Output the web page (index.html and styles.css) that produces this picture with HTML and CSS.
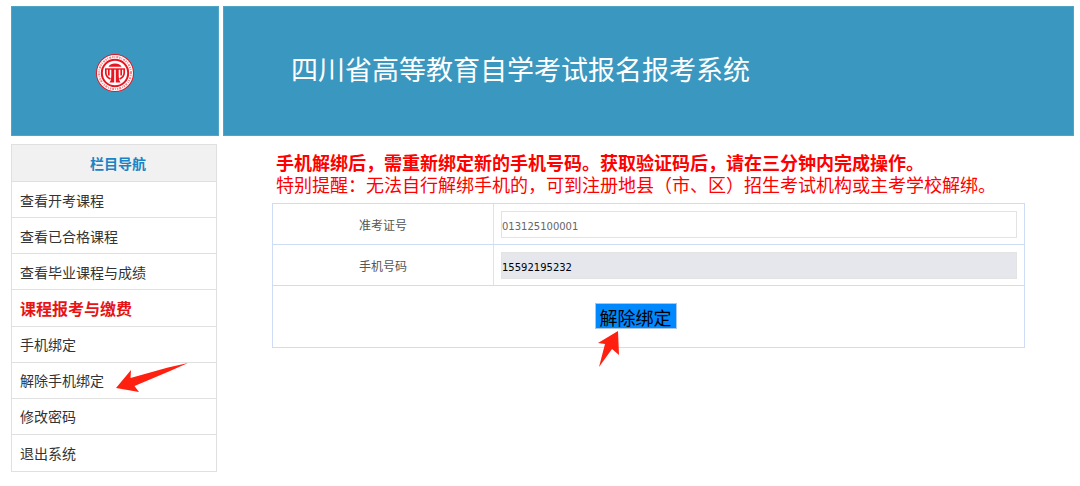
FILE: index.html
```html
<!DOCTYPE html>
<html lang="zh-CN">
<head>
<meta charset="utf-8">
<meta name="viewport" content="width=device-width, initial-scale=1">
<title>四川省高等教育自学考试报名报考系统</title>
<link rel="stylesheet" href="styles.css">
</head>
<body>
<div class="page">
  <header class="header">
    <div class="header__logo">
      <svg class="seal" viewBox="0 0 38 38" aria-hidden="true">
        <circle cx="19" cy="19" r="19" fill="#e8141f"/>
        <circle cx="19" cy="19" r="18" fill="#fff"/>
        <circle cx="19" cy="19" r="16" fill="none" stroke="#f0868c" stroke-width="2" stroke-dasharray="1.3 1 0.8 1.2 2 0.9"/>
        <circle cx="19" cy="19" r="13.2" fill="none" stroke="#e8141f" stroke-width="2"/>
        <path d="M12.500 12.800Q13.500 9.600 19 9.400Q24.500 9.600 25.500 12.800Z" fill="#e8141f"/>
        <path d="M9 15H29" stroke="#e8141f" stroke-width="1.400"/>
        <path d="M9.800 15V19Q10 23 14.500 25M12.800 15V21.500M28.200 15V19Q28 23 23.500 25M25.200 15V21.500" fill="none" stroke="#e8141f" stroke-width="1.700"/>
        <path d="M15.300 15H18.200V28.500H13.500Q15.500 26 15.300 22ZM19.800 15H22.700V22Q22.500 26 24.500 28.500H19.800Z" fill="#e8141f"/>
      </svg>
    </div>
    <div class="header__banner"><h1 class="header__title">四川省高等教育自学考试报名报考系统</h1></div>
  </header>
  <div class="body">
    <nav class="nav" aria-labelledby="nav-title">
      <h2 class="nav__title" id="nav-title">栏目导航</h2>
      <ul class="nav__list">
        <li class="nav__item"><a class="nav__link" href="#">查看开考课程</a></li>
        <li class="nav__item"><a class="nav__link" href="#">查看已合格课程</a></li>
        <li class="nav__item"><a class="nav__link" href="#">查看毕业课程与成绩</a></li>
        <li class="nav__item"><a class="nav__link nav__link--hot" href="#">课程报考与缴费</a></li>
        <li class="nav__item"><a class="nav__link" href="#">手机绑定</a></li>
        <li class="nav__item"><a class="nav__link" href="#">解除手机绑定</a>
          <svg class="arrow arrow--nav" viewBox="0 0 72 30" aria-hidden="true"><path d="M0 25L15 7L14.500 15L52 4.500L72 0L54 8L18.500 23L23 29Z" fill="#ff2010"/></svg>
        </li>
        <li class="nav__item"><a class="nav__link" href="#">修改密码</a></li>
        <li class="nav__item"><a class="nav__link" href="#">退出系统</a></li>
      </ul>
    </nav>
    <main class="main">
      <div class="notice">
        <p class="notice__line notice__line--strong">手机解绑后，需重新绑定新的手机号码。获取验证码后，请在三分钟内完成操作。</p>
        <p class="notice__line">特别提醒：无法自行解绑手机的，可到注册地县（市、区）招生考试机构或主考学校解绑。</p>
      </div>
      <form class="form">
        <div class="form__row">
          <label class="form__label" for="ticket">准考证号</label>
          <div class="form__field"><input class="input" id="ticket" type="text" value="013125100001"></div>
        </div>
        <div class="form__row">
          <label class="form__label" for="phone">手机号码</label>
          <div class="form__field"><input class="input input--locked" id="phone" type="text" value="15592195232" readonly></div>
        </div>
        <div class="form__actions">
          <div class="action">
            <button class="button" type="button">解除绑定</button>
            <svg class="arrow arrow--button" viewBox="0 0 21 36" aria-hidden="true"><path d="M20 0L21 24L14 18L1 36L7 13L0 12Z" fill="#ff2010"/></svg>
          </div>
        </div>
      </form>
    </main>
  </div>
</div>
</body>
</html>
```
FILE: styles.css
```css
* {
  box-sizing: border-box;
}

body {
  margin: 0;
  background: #fff;
  color: #333;
  font-family: "Noto Sans CJK SC", sans-serif;
  font-size: 14px;
}

h1, h2, p, ul {
  margin: 0;
  padding: 0;
}

.page {
  padding: 6px 6px 14px 11px;
}

.header,
.body {
  display: grid;
  grid-template-columns: 208px 1fr;
  column-gap: 4px;
}

.header__logo,
.header__banner {
  display: flex;
  align-items: center;
  min-height: 130px;
  background: #3a98c0;
  border: 1px solid #4ea5c8;
}

.header__logo {
  justify-content: center;
  padding-top: 4px;
}

.seal {
  width: 38px;
  height: 38px;
}

.header__banner {
  padding: 0 0 4px 67px;
}

.header__title {
  color: #fff;
  font-size: 27px;
  line-height: 40px;
  font-weight: 400;
}

.body {
  padding-top: 8px;
  align-items: start;
}

.nav {
  display: flex;
  flex-direction: column;
  min-height: 328px;
  margin-right: 2px;
  border: 1px solid #e0e0e0;
}

.nav__title {
  padding-left: 8px;
  background: #f1f1f1;
  border-bottom: 1px solid #e0e0e0;
  color: #1b83c4;
  font-size: 14px;
  line-height: 36px;
  font-weight: 700;
  text-align: center;
}

.nav__list {
  flex: 1;
  display: grid;
  grid-auto-rows: 1fr;
  list-style: none;
}

.nav__item {
  position: relative;
  display: flex;
  align-items: center;
  border-bottom: 1px solid #e0e0e0;
}

.nav__item:last-child {
  border-bottom: 0;
}

.nav__link {
  padding-left: 8px;
  color: #333;
  line-height: 24px;
  text-decoration: none;
}

.nav__link--hot {
  color: #e61414;
  font-size: 16px;
  font-weight: 700;
}

.arrow {
  position: absolute;
  pointer-events: none;
}

.arrow--nav {
  left: 104px;
  top: 0;
  width: 72px;
  height: 30px;
}

.main {
  padding: 7px 49px 0;
}

.notice {
  padding: 0 4px 8px;
  color: #f00;
  font-size: 18px;
  line-height: 22px;
}

.notice__line--strong {
  font-weight: 700;
}

.form {
  border: 1px solid #cfdcf5;
}

.form__row {
  display: grid;
  grid-template-columns: 221px 1fr;
  border-bottom: 1px solid #cfdcf5;
}

.form__label {
  display: flex;
  align-items: center;
  justify-content: center;
  border-right: 1px solid #dbe2f8;
  color: #555;
  font-size: 12px;
}

.form__field {
  padding: 7px 7px 6px;
}

.input {
  display: block;
  width: 100%;
  height: 27px;
  padding: 4px 0 0;
  border: 1px solid #e3e3e3;
  border-radius: 0;
  background: #fff;
  color: #666;
  font-family: "DejaVu Sans", sans-serif;
  font-size: 10px;
}

.input--locked {
  background: #e6e7ec;
  color: #000;
}

.form__actions {
  display: flex;
  justify-content: center;
  padding: 17px 26px 18px 0;
}

.action {
  position: relative;
}

.button {
  display: block;
  height: 26px;
  padding: 2px 4px 0;
  border: 1px solid #a9c8e8;
  border-radius: 0;
  background: #08f;
  color: #000;
  font-family: inherit;
  font-size: 18px;
  line-height: 22px;
}

.arrow--button {
  left: 3px;
  top: 28px;
  width: 21px;
  height: 36px;
}
```
